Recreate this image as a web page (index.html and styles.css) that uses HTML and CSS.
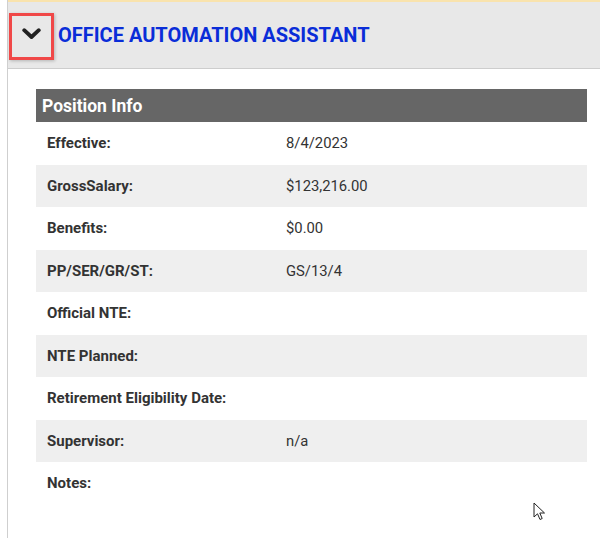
FILE: index.html
```html
<!DOCTYPE html>
<html>
<head>
<meta charset="utf-8">
<link rel="stylesheet" href="styles.css">
</head>
<body>
<div class="page">
  <div class="header">
    <button class="toggle" type="button">
      <svg width="19" height="12" viewBox="0 0 19 12"><path d="M2.2 2.2 L9.5 9 L16.8 2.2" fill="none" stroke="#222" stroke-width="3.8" stroke-linecap="round" stroke-linejoin="round"/></svg>
    </button>
    <h1 class="title">OFFICE AUTOMATION ASSISTANT</h1>
  </div>
  <div class="panel">
    <div class="panel-head">Position Info</div>
    <div class="row"><div class="label">Effective:</div><div class="value">8/4/2023</div></div>
    <div class="row alt"><div class="label">GrossSalary:</div><div class="value">$123,216.00</div></div>
    <div class="row"><div class="label">Benefits:</div><div class="value">$0.00</div></div>
    <div class="row alt"><div class="label">PP/SER/GR/ST:</div><div class="value">GS/13/4</div></div>
    <div class="row"><div class="label">Official NTE:</div><div class="value"></div></div>
    <div class="row alt"><div class="label">NTE Planned:</div><div class="value"></div></div>
    <div class="row"><div class="label">Retirement Eligibility Date:</div><div class="value"></div></div>
    <div class="row alt"><div class="label">Supervisor:</div><div class="value">n/a</div></div>
    <div class="row"><div class="label">Notes:</div><div class="value"></div></div>
  </div>
  <svg class="cursor" width="14" height="20" viewBox="0 0 14 20"><path d="M1 1 L1 15 L4.5 11.8 L7 17.5 L9.2 16.5 L6.8 11 L11.5 11 Z" fill="#fff" stroke="#222" stroke-width="1" stroke-linejoin="round"/></svg>
</div>
</body>
</html>
```
FILE: styles.css
```css
html, body {
  margin: 0;
  padding: 0;
  background: #fff;
}
body {
  font-family: Roboto, "Liberation Sans", Arial, sans-serif;
  width: 600px;
  height: 538px;
  overflow: hidden;
}
.page {
  position: relative;
  margin-left: 7px;
  border-left: 1px solid #cfcfcf;
  height: 538px;
  box-sizing: border-box;
}
.header {
  display: flex;
  align-items: center;
  gap: 4px;
  height: 66px;
  box-sizing: content-box;
  background: #e8e8e8;
  border-top: 2px solid #f9e3ad;
  border-bottom: 1px solid #cdcdcd;
  padding-left: 1px;
}
.toggle {
  width: 45px;
  height: 47px;
  margin-top: 3px;
  box-sizing: border-box;
  border: 3px solid #f04848;
  background: #e8e8e8;
  box-shadow: 1px 1px 3px rgba(0,0,0,0.22);
  display: flex;
  align-items: center;
  justify-content: center;
  padding: 0 0 5px 0;
  cursor: pointer;
}
.title {
  margin: 0;
  font-size: 20px;
  font-weight: 700;
  color: #0a2dd8;
  letter-spacing: 0;
}
.panel {
  margin: 20px 13px 0 28px;
}
.panel-head {
  height: 33px;
  background: #666666;
  color: #fff;
  font-weight: 700;
  font-size: 17.5px;
  display: flex;
  align-items: center;
  padding-left: 6px;
}
.row {
  display: flex;
  align-items: center;
  height: 42.5px;
  font-size: 14.8px;
  color: #333;
}
.row.alt {
  background: #efefef;
}
.label {
  width: 239px;
  padding-left: 11px;
  font-weight: 700;
  font-size: 15px;
}
.value {
  font-weight: 400;
}
.cursor {
  position: absolute;
  left: 525px;
  top: 502px;
}
```
